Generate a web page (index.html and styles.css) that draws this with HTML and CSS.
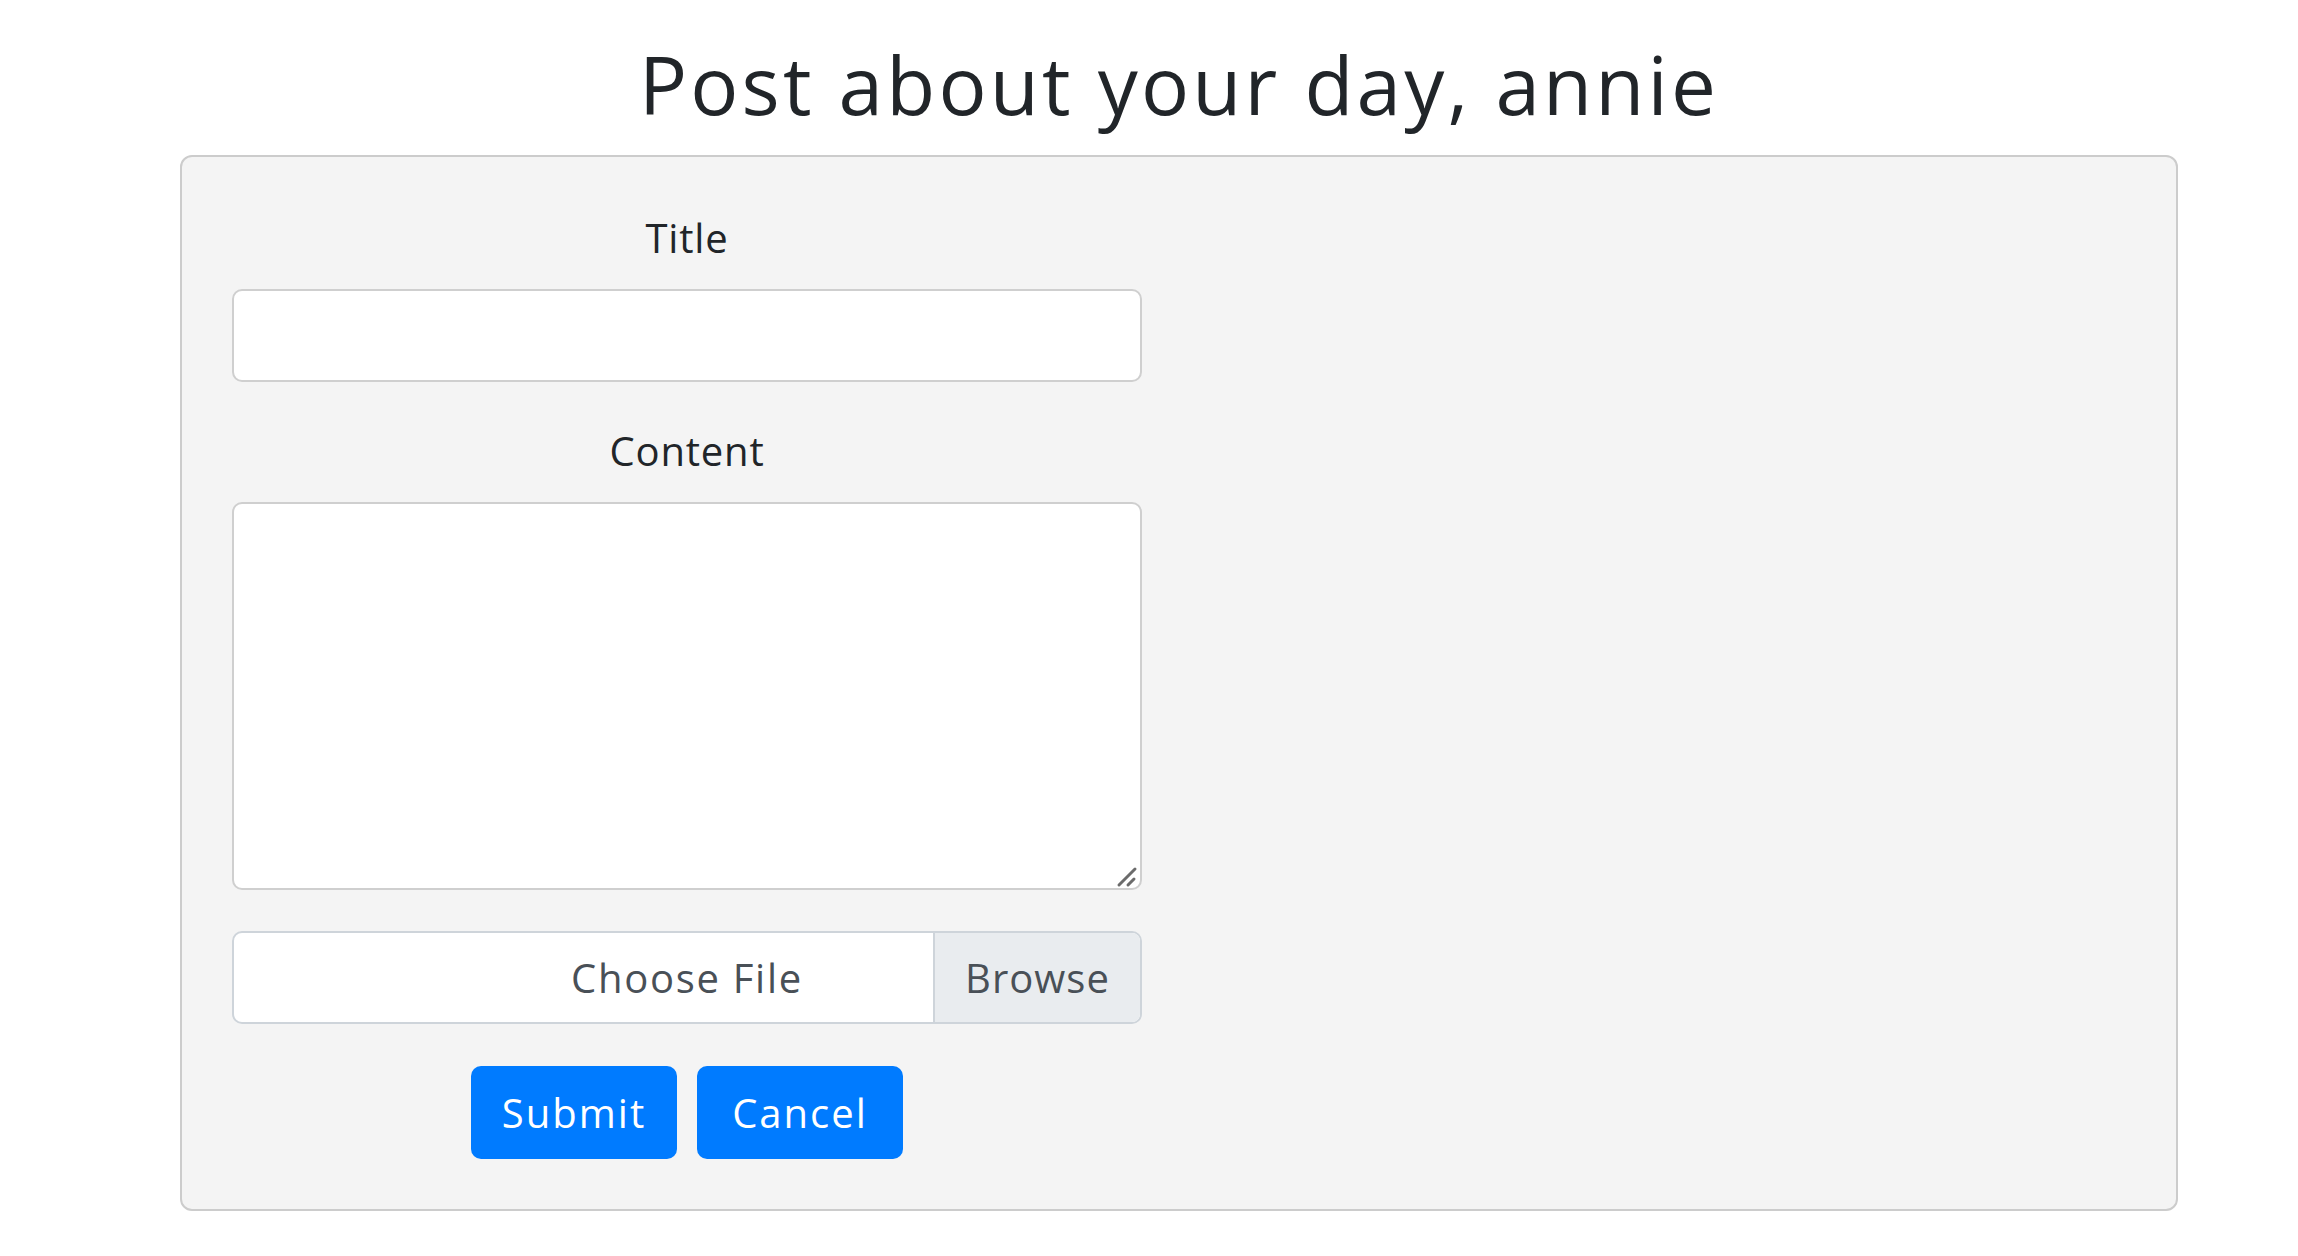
FILE: index.html
```html
<!DOCTYPE html>
<html lang="en">
<head>
<meta charset="utf-8">
<title>Post</title>
<link rel="stylesheet" href="styles.css">
</head>
<body>
<div class="container">
  <h1 class="heading">Post about your day, annie</h1>
  <div class="card">
    <form class="post-form">
      <div class="form-group">
        <label class="form-label" for="title">Title</label>
        <input class="form-control" id="title" type="text">
      </div>
      <div class="form-group">
        <label class="form-label" for="content">Content</label>
        <div class="area-wrap">
          <textarea class="form-control text-area" id="content"></textarea>
          <svg class="grip" width="24" height="24" viewBox="0 0 24 24" aria-hidden="true">
            <line x1="3" y1="21" x2="19" y2="5" stroke="#6b6b6b" stroke-width="3" stroke-linecap="round"/>
            <line x1="12" y1="21" x2="18" y2="15" stroke="#6b6b6b" stroke-width="3" stroke-linecap="round"/>
          </svg>
        </div>
      </div>
      <div class="form-group">
        <div class="custom-file">
          <span class="custom-file-label">Choose File</span>
          <span class="browse">Browse</span>
        </div>
      </div>
      <div class="actions">
        <button type="button" class="btn">Submit</button>
        <button type="button" class="btn">Cancel</button>
      </div>
    </form>
  </div>
</div>
</body>
</html>
```
FILE: styles.css
```css
html, body {
  margin: 0;
  padding: 0;
  background: #ffffff;
}
body {
  font-family: "Open Sans", "Liberation Sans", sans-serif;
  color: #212529;
}
.container {
  margin-left: 180px;
  width: 1998px;
}
.heading {
  margin: 36px 0 23px 0;
  font-size: 80px;
  line-height: 96px;
  font-weight: 400;
  letter-spacing: 3.2px;
  text-align: center;
  color: #212529;
}
.card {
  box-sizing: border-box;
  height: 1056px;
  background: #f4f4f4;
  border: 2px solid #cccccc;
  border-radius: 12px;
  padding: 51px 50px 0 50px;
}
.post-form {
  width: 910px;
  display: flex;
  flex-direction: column;
}
.form-group {
  display: flex;
  flex-direction: column;
  margin-bottom: 39px;
}
.form-label {
  font-size: 40px;
  line-height: 60px;
  text-align: center;
  margin-bottom: 21px;
  letter-spacing: 0.8px;
  color: #212529;
}
.form-control {
  box-sizing: border-box;
  width: 910px;
  height: 93px;
  margin: 0;
  background: #ffffff;
  border: 2px solid #cfcfcf;
  border-radius: 10px;
  font-family: inherit;
  font-size: 40px;
  padding: 0 30px;
}
.area-wrap {
  position: relative;
  width: 910px;
}
.text-area {
  height: 388px;
  resize: none;
  display: block;
}
.grip {
  position: absolute;
  right: 2px;
  bottom: 2px;
}
.custom-file {
  box-sizing: border-box;
  width: 910px;
  height: 93px;
  display: flex;
  border: 2px solid #ced4da;
  border-radius: 10px;
  background: #ffffff;
  overflow: hidden;
  position: relative;
  margin-top: 2px;
}
.custom-file-label {
  position: absolute;
  left: 0;
  right: 0;
  top: 0;
  bottom: 0;
  display: flex;
  align-items: center;
  justify-content: center;
  font-size: 40px;
  color: #495057;
  letter-spacing: 1.7px;
}
.browse {
  margin-left: auto;
  width: 205px;
  display: flex;
  align-items: center;
  justify-content: center;
  background: #e9ecef;
  border-left: 2px solid #ced4da;
  font-size: 40px;
  letter-spacing: 1px;
  color: #495057;
  position: relative;
  z-index: 1;
}
.actions {
  display: flex;
  justify-content: center;
  gap: 20px;
  margin-top: 3px;
}
.btn {
  width: 206px;
  height: 93px;
  border: none;
  border-radius: 10px;
  background: #007bff;
  color: #ffffff;
  font-family: inherit;
  font-size: 40px;
  letter-spacing: 2px;
  padding: 0;
  cursor: pointer;
}
```
